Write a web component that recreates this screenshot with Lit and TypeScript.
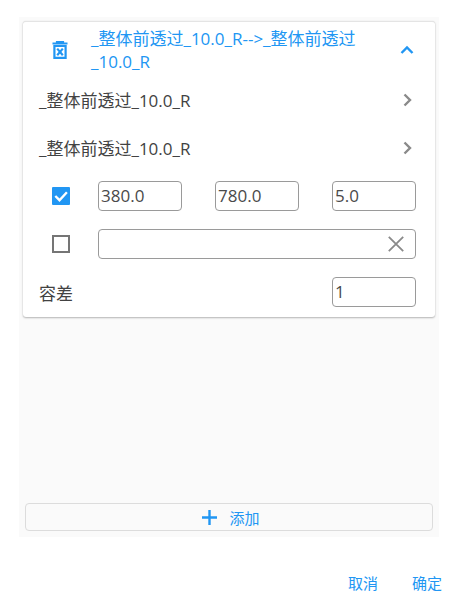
import { LitElement, html, css } from "lit";
import { customElement } from "lit/decorators.js";

const chevron = (d: string, cls: string) => html`<svg class=${cls} viewBox="0 0 24 24" width="24" height="24"><path d=${d} fill="none" stroke="currentColor" stroke-width="2.4"/></svg>`;

@customElement("app-root")
export class AppRoot extends LitElement {
  static styles = css`
    :host { display: block; width: 459px; height: 602px; background: #fff; font-family: "Open Sans", "Noto Sans CJK SC", sans-serif; color: #424242; overflow: hidden; }
    * { box-sizing: border-box; }
    .panel { margin: 17px 20px 0 19px; height: 520px; background: #fafafa; display: flex; flex-direction: column; padding: 4px 4px 6px; }
    .card { background: #fff; height: 296px; border-radius: 3px; border-top: 1px solid #e4e4e4; box-shadow: 0 1px 2px rgba(0,0,0,.28), 0 0 1px rgba(0,0,0,.1); margin-bottom: auto; display: flex; flex-direction: column; }
    .head { height: 54px; display: flex; align-items: center; flex: none; padding-top: 1px; }
    .trash { width: 68px; display: flex; justify-content: center; color: #2196f3; flex: none; padding-left: 6px; }
    .title { width: 276px; font-size: 17px; line-height: 23px; color: #2196f3; flex: none; padding-top: 1px; }
    .grow { flex: 1; }
    .chev { color: #2196f3; }
    .chev-box { flex: none; width: 24px; margin-right: 16px; display: flex; }
    .row { height: 48px; display: flex; align-items: center; padding-left: 16px; font-size: 17px; flex: none; }
    .row > span { padding-bottom: 2px; }
    .row svg.g { color: #8a8a8a; }
    .fields { height: 48px; display: flex; align-items: center; flex: none; padding-right: 19px; }
    .check { width: 75px; flex: none; display: flex; justify-content: flex-start; padding-left: 29px; }
    .box { width: 18px; height: 18px; display: block; }
    .inputs { flex: 1; display: flex; justify-content: space-between; }
    .inp { width: 84px; height: 30px; border: 1px solid #9a9a9a; border-radius: 4px; background: #fff; font-size: 17px; line-height: 28px; padding-left: 2px; color: #4a4a4a; }
    .wide { flex: 1; height: 30px; border: 1px solid #9a9a9a; border-radius: 4px; display: flex; align-items: center; justify-content: flex-end; padding-right: 11px; color: #8a8a8a; }
    .tol { justify-content: space-between; padding-left: 16px; }
    .tol span { font-size: 17px; }
    .add { height: 28px; border: 1px solid #dcdcdc; border-radius: 4px; margin: 0 2px; padding-left: 4px; display: flex; align-items: center; justify-content: center; gap: 12px; color: #2196f3; font-size: 15px; background: #fafafa; }
    .foot { display: flex; justify-content: flex-end; gap: 34px; padding: 36px 17px 0 0; color: #2196f3; font-size: 15px; line-height: 20px; }
  `;

  render() {
    return html`
      <div class="panel">
        <div class="card">
          <div class="head">
            <div class="trash">
              <svg viewBox="0 0 16 18" width="16" height="18"><path d="M.5 2.5h15M5 2.5V.8h6v1.7M2.4 5h11.2v11.8H2.4z" fill="none" stroke="currentColor" stroke-width="2.2"/><path d="M5.2 7.6l5.6 6.6M10.8 7.6l-5.6 6.6" stroke="currentColor" stroke-width="2.2"/></svg>
            </div>
            <div class="title">_整体前透过_10.0_R--&gt;_整体前透过_10.0_R</div>
            <div class="grow"></div>
            <div class="chev-box">${chevron("M6.5 15l5.5-5.5 5.5 5.5", "chev")}</div>
          </div>
          <div class="row"><span>_整体前透过_10.0_R</span><div class="grow"></div><div class="chev-box">${chevron("M9.5 6.5l5.5 5.5-5.5 5.5", "g")}</div></div>
          <div class="row"><span>_整体前透过_10.0_R</span><div class="grow"></div><div class="chev-box">${chevron("M9.5 6.5l5.5 5.5-5.5 5.5", "g")}</div></div>
          <div class="fields">
            <div class="check"><svg class="box" viewBox="0 0 18 18"><rect width="18" height="18" rx="1" fill="#2196f3"/><path d="M3.3 9l4.2 4.2 7.4-8" fill="none" stroke="#fff" stroke-width="2.4"/></svg></div>
            <div class="inputs"><div class="inp">380.0</div><div class="inp">780.0</div><div class="inp">5.0</div></div>
          </div>
          <div class="fields">
            <div class="check"><svg class="box" viewBox="0 0 18 18"><rect x="1" y="1" width="16" height="16" fill="none" stroke="#757575" stroke-width="2"/></svg></div>
            <div class="wide"><svg viewBox="0 0 16 16" width="16" height="16"><path d="M.8 .8l14.4 14.4M15.2 .8L.8 15.2" stroke="currentColor" stroke-width="1.8"/></svg></div>
          </div>
          <div class="fields tol"><span>容差</span><div class="inp">1</div></div>
        </div>
        <div class="add">
          <svg viewBox="0 0 15 15" width="15" height="15"><path d="M7.5 0v15M0 7.5h15" stroke="currentColor" stroke-width="2.4"/></svg>
          <span>添加</span>
        </div>
      </div>
      <div class="foot"><span>取消</span><span>确定</span></div>
    `;
  }
}
